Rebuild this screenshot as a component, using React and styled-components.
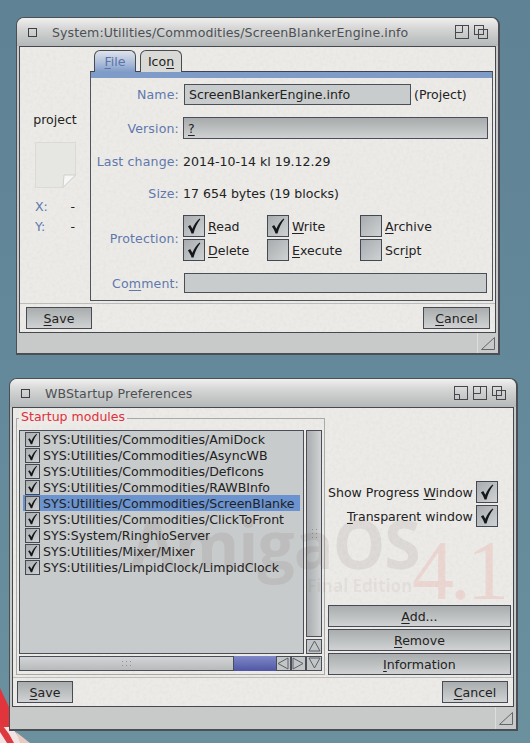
import React from "react";
import styled, { createGlobalStyle } from "styled-components";

const GlobalStyle = createGlobalStyle`
  html, body { margin: 0; padding: 0; }
  body { background: #5f8394; font-family: "DejaVu Sans", sans-serif; }
  * { box-sizing: border-box; }
  u { text-underline-offset: 2px; text-decoration-thickness: 1px; }
`;

// soft paper grain for the window backgrounds
const paper = `url("data:image/svg+xml,%3Csvg xmlns='http://www.w3.org/2000/svg' width='300' height='300'%3E%3Cfilter id='n'%3E%3CfeTurbulence type='fractalNoise' baseFrequency='0.3' numOctaves='3'/%3E%3CfeColorMatrix values='0 0 0 0 0.45 0 0 0 0 0.45 0 0 0 0 0.43 0 0 0 0.18 -0.06'/%3E%3C/filter%3E%3Crect width='300' height='300' filter='url(%23n)'/%3E%3C/svg%3E")`;

const Desktop = styled.div`
  position: relative;
  width: 530px;
  height: 743px;
  overflow: hidden;
  background: linear-gradient(180deg, #5f8294 0%, #648a9b 60%, #6b919f 100%);
`;

const Ball = styled.svg`
  position: absolute;
  left: 0;
  top: 680px;
`;

const Win = styled.section`
  position: absolute;
  left: ${(p) => p.$x}px;
  top: ${(p) => p.$y}px;
  width: ${(p) => p.$w}px;
  height: ${(p) => p.$h}px;
  display: flex;
  flex-direction: column;
  background: #c8caca;
  border: 1px solid #4b4f55;
  border-width: 1px 2px 2px 1px;
  border-radius: 8px 8px 0 0;
`;

const TitleBar = styled.header`
  height: 28px;
  flex: none;
  display: flex;
  align-items: center;
  padding: 0 10px 0 11px;
  border-radius: 7px 7px 0 0;
  background: linear-gradient(180deg, #f0f0ef 0%, #d6d7d6 35%, #b4b8b8 100%);
  color: #4d5054;
  font-size: 12.55px;
  letter-spacing: 0.11px;
`;

const CloseBox = styled.span`
  width: 9px;
  height: 9px;
  flex: none;
  margin-right: 15px;
  border: 1px solid #3d3f44;
`;

const TitleText = styled.span`
  flex: 1;
  white-space: nowrap;
`;

const TitleIcons = styled.span`
  display: flex;
  gap: 5px;
`;

const Body = styled.div`
  flex: 1;
  margin: 0 2px;
  display: flex;
  flex-direction: column;
  min-height: 0;
  background: ${paper}, #ecebe8;
  border: 1px solid #45494f;
  color: #222;
  font-size: 12.55px;
`;

const MainRow = styled.div`
  flex: 1;
  display: flex;
  min-height: 0;
`;

const Sidebar = styled.aside`
  width: 70px;
  flex: none;
  display: flex;
  flex-direction: column;
  align-items: center;
  padding-top: 65px;
`;

const PageIcon = styled.svg`
  margin-top: 15px;
`;

const InfoRow = styled.div`
  width: 40px;
  margin-top: ${(p) => p.$mt}px;
  display: flex;
  justify-content: space-between;
  color: #6079ad;
  line-height: 14px;
  span + span { color: #222; }
`;

const TabColumn = styled.div`
  flex: 1;
  display: flex;
  flex-direction: column;
  margin: 3px 2px 0 0;
`;

const Tabs = styled.div`
  display: flex;
  gap: 4px;
  height: 21px;
  flex: none;
  padding-left: 4px;
`;

const Tab = styled.div`
  width: 42px;
  height: 22px;
  z-index: 1;
  display: flex;
  align-items: center;
  justify-content: center;
  border: 1px solid #474b55;
  border-bottom: 0;
  border-radius: 6px 6px 0 0;
  background: ${(p) => (p.$active ? "linear-gradient(180deg, #dfe3ea 0%, #a9bbd8 60%, #7f9bc8 100%)" : "#d9d9d6")};
  color: ${(p) => (p.$active ? "#5a74ab" : "#222")};
`;

const TabPanel = styled.div`
  flex: 1;
  display: flex;
  flex-direction: column;
  border: 1px solid #50545c;
  border-top: 1px solid #3e4350;
  padding-top: 7px;
  &::before {
    content: "";
    display: block;
    height: 6px;
    margin-top: -7px;
    margin-bottom: 6px;
    background: #7f9bc8;
  }
`;

const FormRow = styled.div`
  display: flex;
  align-items: center;
  height: ${(p) => p.$h}px;
  margin-top: ${(p) => p.$mt}px;
`;

const FieldLabel = styled.label`
  width: 88px;
  flex: none;
  margin-right: 4px;
  text-align: right;
  color: #5f78ad;
  white-space: nowrap;
  letter-spacing: 0.15px;
`;

const Field = styled.div`
  width: ${(p) => p.$w}px;
  height: 100%;
  margin-left: ${(p) => p.$ml || 0}px;
  display: flex;
  align-items: center;
  padding-left: 4px;
  border: 1px solid #4a4e58;
  background: ${(p) => (p.$shaded ? "linear-gradient(180deg, #a7abac 0%, #cfd1d2 100%)" : "#c9cccd")};
  white-space: nowrap;
`;

const FieldNote = styled.span`
  margin-left: 3px;
`;

const FlagGrid = styled.div`
  display: grid;
  grid-template-columns: 84px 93px auto;
  grid-auto-rows: 22px;
  row-gap: 2px;
`;

const Flag = styled.div`
  display: flex;
  align-items: center;
  gap: 3px;
`;

const CheckBox = styled.span`
  width: ${(p) => p.$size}px;
  height: ${(p) => p.$size}px;
  flex: none;
  display: flex;
  align-items: center;
  justify-content: center;
  border: 1px solid #444853;
  background: linear-gradient(135deg, #a8acae 0%, #cfd2d3 100%);
`;

const Footer = styled.footer`
  flex: none;
  display: flex;
  justify-content: space-between;
  margin-top: 2px;
  padding: 3px 5px 3px ${(p) => p.$pl}px;
  border-top: 1px solid #bcbdbb;
`;

const Button = styled.button`
  width: ${(p) => p.$w ? p.$w + "px" : "100%"};
  height: ${(p) => p.$h || 22}px;
  padding: 0;
  font: inherit;
  color: #222;
  border: 1px solid #474b55;
  background: linear-gradient(180deg, #a9adae 0%, #d0d2d3 100%);
`;

const BottomBar = styled.div`
  height: ${(p) => p.$h}px;
  flex: none;
  display: flex;
  justify-content: flex-end;
`;

const Resizer = styled.div`
  width: 21px;
  display: flex;
  align-items: center;
  justify-content: center;
  border-left: 1px solid #dcdddc;
`;

/* second window */
const GroupBox = styled.div`
  position: relative;
  width: 309px;
  flex: none;
  margin: 10px 0 0 3px;
  padding: 11px 2px 3px 2px;
  display: flex;
  flex-direction: column;
  gap: 2px;
  border: 1px solid #a9aaa8;
`;

const Legend = styled.span`
  position: absolute;
  top: -10px;
  left: 2px;
  padding: 0 2px;
  background: #ecebe8;
  color: #e0303c;
  line-height: 16px;
`;

const ListRow = styled.div`
  flex: 1;
  display: flex;
  gap: 2px;
  min-height: 0;
`;

const FileList = styled.ul`
  flex: 1;
  margin: 0;
  padding: 0 3px;
  list-style: none;
  overflow: hidden;
  border: 1px solid #4a4e58;
  background: #c8cbcc;
`;

const FileItem = styled.li`
  display: flex;
  align-items: center;
  gap: 3px;
  height: 16px;
  padding-left: 2px;
  white-space: nowrap;
  background: ${(p) => (p.$selected ? "#6a93cf" : "transparent")};
`;

const FileName = styled.span`
  overflow: hidden;
`;

const ScrollColumn = styled.div`
  width: 16px;
  flex: none;
  display: flex;
  flex-direction: column;
  gap: 2px;
`;

const VTrack = styled.div`
  flex: 1;
  display: flex;
  align-items: center;
  justify-content: center;
  border: 1px solid #4a4e58;
  background: linear-gradient(90deg, #a9adae 0%, #d0d2d3 100%);
`;

const ScrollRow = styled.div`
  display: flex;
  height: 15px;
  flex: none;
`;

const HTrack = styled.div`
  flex: 1;
  display: flex;
  align-items: center;
  justify-content: center;
  border: 1px solid #4a4e58;
  background: linear-gradient(180deg, #d2d4d5 0%, #b8bbbc 100%);
`;

const HFill = styled.div`
  width: 42px;
  background: linear-gradient(180deg, #8088c8 0%, #4f57a4 100%);
`;

const Arrow = styled.span`
  width: ${(p) => p.$w}px;
  height: 15px;
  flex: none;
  display: flex;
  align-items: center;
  justify-content: center;
  border: 1px solid #4a4e58;
  background: #c3c6c7;
`;

const SideColumn = styled.div`
  flex: 1;
  display: flex;
  flex-direction: column;
  margin: 10px 3px 0 3px;
`;

const Options = styled.div`
  margin-top: 63px;
  padding-right: 13px;
  display: flex;
  flex-direction: column;
  gap: 2px;
`;

const OptionRow = styled.div`
  display: flex;
  align-items: center;
  justify-content: flex-end;
  gap: 3px;
  height: 22px;
  white-space: nowrap;
`;

const ActionStack = styled.div`
  margin-top: auto;
  display: flex;
  flex-direction: column;
  gap: 2px;
`;

const Watermark = styled.div`
  position: absolute;
  left: 0;
  top: 0;
  pointer-events: none;
  white-space: nowrap;
`;

const MarkLogo = styled.span`
  position: absolute;
  left: 130px;
  top: 498px;
  font: bold 66px "Open Sans", sans-serif;
  letter-spacing: -1px;
  color: rgba(95, 70, 65, 0.1);
`;

const MarkEdition = styled.span`
  position: absolute;
  left: 307px;
  top: 574px;
  font: bold 17px "Open Sans", sans-serif;
  color: rgba(95, 70, 65, 0.08);
`;

const MarkVersion = styled.span`
  position: absolute;
  left: 412px;
  top: 522px;
  font: 84px "Liberation Serif", serif;
  letter-spacing: -4px;
  color: rgba(235, 75, 60, 0.13);
`;

const Check = ({ size = 18 }) => (
  <svg width={size} height={size} viewBox="0 0 16 16">
    <path d="M2.6 8.4 L4.6 7.2 L6.6 10.4 C8 6.8 10.4 3.6 13 1.4 L13.6 2 C11 5.4 8.8 9.8 7.6 14.6 L5.8 14.6 C5 12 3.8 10 2.6 8.4 Z" fill="#15171a" />
  </svg>
);

const IconifyIcon = () => (
  <svg width="14" height="14" viewBox="0 0 14 14" fill="none" stroke="#45474c">
    <rect x="0.5" y="0.5" width="13" height="13" />
    <path d="M0.5 8.5 H5.5 V13.5" />
  </svg>
);

const ZoomIcon = () => (
  <svg width="14" height="14" viewBox="0 0 14 14" fill="none" stroke="#45474c">
    <rect x="0.5" y="0.5" width="13" height="13" />
    <path d="M0.5 7.5 H7.5 V0.5" />
  </svg>
);

const DepthIcon = () => (
  <svg width="14" height="14" viewBox="0 0 14 14" fill="none" stroke="#45474c">
    <rect x="0.5" y="0.5" width="9" height="9" />
    <rect x="4.5" y="4.5" width="9" height="9" />
  </svg>
);

const ResizeIcon = () => (
  <svg width="14" height="13" viewBox="0 0 14 13" fill="none" stroke="#63666a">
    <path d="M0.5 12.5 H13.5 V0.5 Z" />
  </svg>
);

const ArrowIcon = ({ dir }) => {
  const shapes = {
    up: "M6.5 1 L12 11 H1 Z",
    down: "M1 1 H12 L6.5 11 Z",
    left: "M11 1 V12 L1 6.5 Z",
    right: "M1 1 V12 L11 6.5 Z",
  };
  return (
    <svg width="13" height="13" viewBox="0 0 13 13" fill="none" stroke="#5c6068">
      <path d={shapes[dir]} />
    </svg>
  );
};

const Grip = ({ vertical }) => (
  <svg width={vertical ? 7 : 10} height={vertical ? 10 : 7} viewBox={vertical ? "0 0 7 10" : "0 0 10 7"} fill="#8f9293">
    {[0, 1, 2].flatMap((a) =>
      [0, 1].map((b) =>
        vertical ? (
          <rect key={`${a}${b}`} x={b * 4 + 1} y={a * 4} width="1" height="1" />
        ) : (
          <rect key={`${a}${b}`} x={a * 4} y={b * 4 + 1} width="1" height="1" />
        )
      )
    )}
  </svg>
);

const modules = [
  "SYS:Utilities/Commodities/AmiDock",
  "SYS:Utilities/Commodities/AsyncWB",
  "SYS:Utilities/Commodities/DefIcons",
  "SYS:Utilities/Commodities/RAWBInfo",
  "SYS:Utilities/Commodities/ScreenBlanke",
  "SYS:Utilities/Commodities/ClickToFront",
  "SYS:System/RinghioServer",
  "SYS:Utilities/Mixer/Mixer",
  "SYS:Utilities/LimpidClock/LimpidClock",
];

const App = () => (
  <Desktop>
    <GlobalStyle />
    <Ball width="40" height="63" viewBox="0 0 40 63">
      <path d="M0 8 L9 27 L9 47 L0 47 Z" fill="#e0353c" />
      <path d="M0 47 L12 47 L18 56 L22 63 L0 63 Z" fill="#f2e4e2" />
      <path d="M0 42 L9 54 L14 63 L7 63 L0 52 Z" fill="#dd3a40" />
      <path d="M16 52 L30 63 L20 63 Z" fill="#e9c9c2" />
    </Ball>

    <Win $x={16} $y={17} $w={484} $h={338}>
      <TitleBar>
        <CloseBox />
        <TitleText>System:Utilities/Commodities/ScreenBlankerEngine.info</TitleText>
        <TitleIcons>
          <ZoomIcon />
          <DepthIcon />
        </TitleIcons>
      </TitleBar>
      <Body>
        <MainRow>
          <Sidebar>
            <span>project</span>
            <PageIcon width="41" height="46" viewBox="0 0 41 46">
              <path d="M0.5 0.5 H40.5 V33 L28 45.5 H0.5 Z" fill="#e6e6e3" stroke="#dadad7" />
              <path d="M40.5 33 H29 L28 45.5 Z" fill="#f6f6f4" stroke="#cfcfcc" />
            </PageIcon>
            <InfoRow $mt={12}><span>X:</span><span>-</span></InfoRow>
            <InfoRow $mt={6}><span>Y:</span><span>-</span></InfoRow>
          </Sidebar>
          <TabColumn>
            <Tabs>
              <Tab $active><span><u>F</u>ile</span></Tab>
              <Tab><span>Ico<u>n</u></span></Tab>
            </Tabs>
            <TabPanel>
              <FormRow $h={21} $mt={0}>
                <FieldLabel>Name:</FieldLabel>
                <Field $w={227} $ml={1}>ScreenBlankerEngine.info</Field>
                <FieldNote>(Project)</FieldNote>
              </FormRow>
              <FormRow $h={22} $mt={12}>
                <FieldLabel>Version:</FieldLabel>
                <Field $w={305} $shaded><u>?</u></Field>
              </FormRow>
              <FormRow $h={22} $mt={11}>
                <FieldLabel>Last change:</FieldLabel>
                <span>2014-10-14 kl 19.12.29</span>
              </FormRow>
              <FormRow $h={22} $mt={10}>
                <FieldLabel>Size:</FieldLabel>
                <span>17 654 bytes (19 blocks)</span>
              </FormRow>
              <FormRow $h={46} $mt={11}>
                <FieldLabel>Protection:</FieldLabel>
                <FlagGrid>
                  <Flag><CheckBox $size={22}><Check /></CheckBox><span><u>R</u>ead</span></Flag>
                  <Flag><CheckBox $size={22}><Check /></CheckBox><span><u>W</u>rite</span></Flag>
                  <Flag><CheckBox $size={22} /><span><u>A</u>rchive</span></Flag>
                  <Flag><CheckBox $size={22}><Check /></CheckBox><span><u>D</u>elete</span></Flag>
                  <Flag><CheckBox $size={22} /><span><u>E</u>xecute</span></Flag>
                  <Flag><CheckBox $size={22} /><span>Scr<u>i</u>pt</span></Flag>
                </FlagGrid>
              </FormRow>
              <FormRow $h={20} $mt={12}>
                <FieldLabel>Co<u>m</u>ment:</FieldLabel>
                <Field $w={303} $ml={1} />
              </FormRow>
            </TabPanel>
          </TabColumn>
        </MainRow>
        <Footer $pl={6}>
          <Button $w={66}><u>S</u>ave</Button>
          <Button $w={67}><u>C</u>ancel</Button>
        </Footer>
      </Body>
      <BottomBar $h={20}>
        <Resizer><ResizeIcon /></Resizer>
      </BottomBar>
    </Win>

    <Win $x={9} $y={378} $w={509} $h={353}>
      <TitleBar>
        <CloseBox />
        <TitleText>WBStartup Preferences</TitleText>
        <TitleIcons>
          <IconifyIcon />
          <ZoomIcon />
          <DepthIcon />
        </TitleIcons>
      </TitleBar>
      <Body>
        <MainRow>
          <GroupBox>
            <Legend>Startup modules</Legend>
            <ListRow>
              <FileList>
                {modules.map((path, i) => (
                  <FileItem key={path} $selected={i === 4}>
                    <CheckBox $size={15}><Check size={14} /></CheckBox>
                    <FileName>{path}</FileName>
                  </FileItem>
                ))}
              </FileList>
              <ScrollColumn>
                <VTrack><Grip vertical /></VTrack>
                <Arrow $w={16}><ArrowIcon dir="up" /></Arrow>
              </ScrollColumn>
            </ListRow>
            <ScrollRow>
              <HTrack><Grip /></HTrack>
              <HFill />
              <Arrow $w={15}><ArrowIcon dir="left" /></Arrow>
              <Arrow $w={15}><ArrowIcon dir="right" /></Arrow>
              <Arrow $w={16}><ArrowIcon dir="down" /></Arrow>
            </ScrollRow>
          </GroupBox>
          <SideColumn>
            <Options>
              <OptionRow>
                <span>Show Progress <u>W</u>indow</span>
                <CheckBox $size={22}><Check /></CheckBox>
              </OptionRow>
              <OptionRow>
                <span><u>T</u>ransparent window</span>
                <CheckBox $size={22}><Check /></CheckBox>
              </OptionRow>
            </Options>
            <ActionStack>
              <Button $h={22}><u>A</u>dd...</Button>
              <Button $h={22}><u>R</u>emove</Button>
              <Button $h={22}><u>I</u>nformation</Button>
            </ActionStack>
          </SideColumn>
        </MainRow>
        <Footer $pl={4}>
          <Button $w={56}><u>S</u>ave</Button>
          <Button $w={66}><u>C</u>ancel</Button>
        </Footer>
      </Body>
      <BottomBar $h={22}>
        <Resizer><ResizeIcon /></Resizer>
      </BottomBar>
    </Win>

    <Watermark>
      <MarkLogo>AmigaOS</MarkLogo>
      <MarkEdition>Final Edition</MarkEdition>
      <MarkVersion>4.1</MarkVersion>
    </Watermark>
  </Desktop>
);

export default App;
